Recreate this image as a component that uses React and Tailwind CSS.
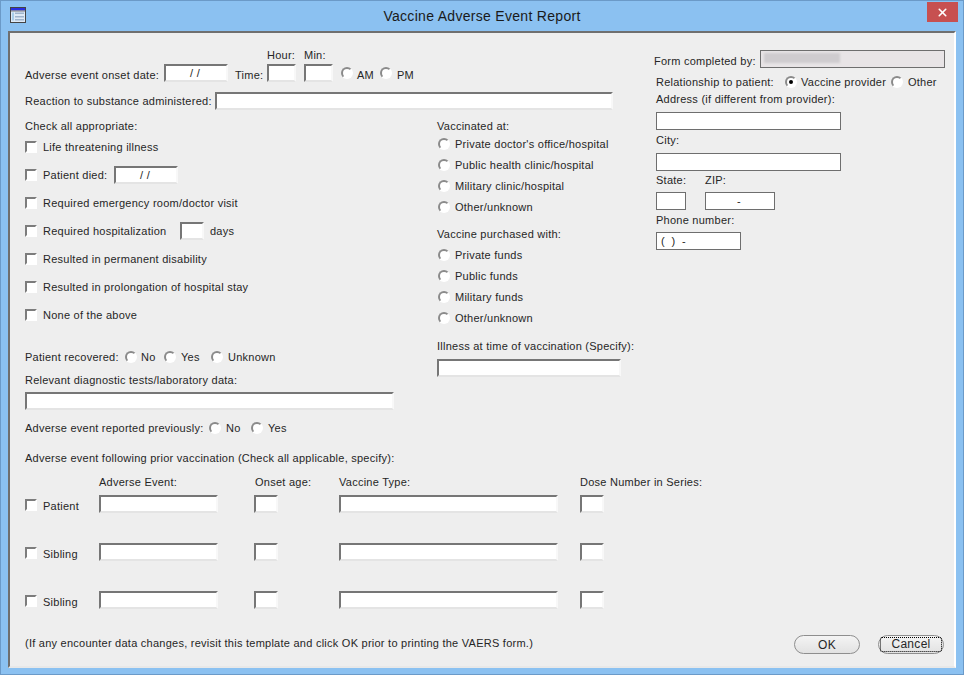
import React from "react";
import { X } from "lucide-react";

function Label({ children, className = "" }) {
	return (
		<span className={`h-[14px] whitespace-nowrap leading-[14px] ${className}`}>
			{children}
		</span>
	);
}

function Field({ className = "", children }) {
	return (
		<div
			className={`flex h-[18px] shrink-0 items-center border-2 border-[#767676] border-r-[#f8f8f8] border-b-[#e4e4e4] bg-white leading-[14px] ${className}`}
		>
			{children}
		</div>
	);
}

function FlatField({ className = "", children }) {
	return (
		<div
			className={`flex h-[18px] shrink-0 items-center border border-[#6e6e6e] bg-white leading-[14px] ${className}`}
		>
			{children}
		</div>
	);
}

function Check({ className = "" }) {
	return (
		<span
			className={`block h-[12px] w-[12px] shrink-0 border-2 border-[#7c7c7c] border-r-white border-b-white bg-white ${className}`}
		/>
	);
}

function Radio({ checked = false, className = "" }) {
	return (
		<span
			className={`flex h-[12px] w-[12px] shrink-0 items-center justify-center rounded-full border-2 border-[#8a8a8a] border-r-white border-b-white bg-white ${className}`}
		>
			{checked && <span className="h-[4px] w-[4px] rounded-full bg-black" />}
		</span>
	);
}

function RadioRow({ label }) {
	return (
		<div className="flex h-[21px] items-center pl-px">
			<Radio />
			<Label className="ml-[5px]">{label}</Label>
		</div>
	);
}

function CheckRow({ children }) {
	return (
		<div className="flex h-[28px] items-center">
			<Check />
			{children}
		</div>
	);
}

function PriorRow({ label, className = "" }) {
	return (
		<div className={`flex h-[18px] items-center ${className}`}>
			<Check className="mt-[2px]" />
			<Label className="ml-[6px] mt-[4px] w-[56px]">{label}</Label>
			<Field className="w-[119px]" />
			<Field className="ml-[36px] w-[24px]" />
			<Field className="ml-[61px] w-[219px]" />
			<Field className="ml-[22px] w-[24px]" />
		</div>
	);
}

export default function App() {
	return (
		<div className="h-[675px] w-[964px] overflow-hidden border border-[#6b9ac8] bg-[#8bc1f1] font-['Liberation_Sans',sans-serif] text-[11px] tracking-[0.25px] text-[#262626]">
			{/* title bar */}
			<div className="relative flex h-[30px] items-center justify-center">
				<svg width="16" height="16" viewBox="0 0 16 16" className="absolute left-[9px] top-[6px]">
					<rect x="0.5" y="0.5" width="15" height="15" fill="#dfeaf6" stroke="#444" />
					<rect x="1" y="1" width="14" height="2.5" fill="#2a2fe0" />
					<rect x="1" y="3.5" width="14" height="1" fill="#777" />
					<rect x="5" y="5.5" width="9" height="1.5" fill="#9fb4cc" />
					<rect x="5" y="9" width="9" height="1.5" fill="#9fb4cc" />
					<rect x="5" y="12" width="9" height="1.5" fill="#9fb4cc" />
					<rect x="2" y="5.5" width="2" height="8" fill="#a8cdea" />
				</svg>
				<span className="text-[14px] tracking-[0.3px] text-[#1a1a1a]">
					Vaccine Adverse Event Report
				</span>
				<div className="absolute right-[5px] top-[1px] flex h-[20px] w-[31px] items-center justify-center bg-[#c75050]">
					<X size={13} strokeWidth={3} color="#fff" />
				</div>
			</div>

			{/* panel */}
			<div className="mx-[7px] h-[637px] border-2 border-[#6f6f6f] border-r-white border-b-[#e8e8e8] bg-[#eeeeee]">
				<div className="flex">
					{/* left and middle */}
					<div className="w-[644px] pl-[15px]">
						<div className="mt-[15px] flex h-[14px] pl-[242px]">
							<Label className="w-[37px]">Hour:</Label>
							<Label>Min:</Label>
						</div>
						<div className="mt-[2px] flex h-[18px] items-start">
							<Label className="mt-[4px] w-[139px]">Adverse event onset date:</Label>
							<Field className="w-[64px] justify-center pr-[2px]">/ /</Field>
							<Label className="ml-[7px] mt-[4px] w-[32px]">Time:</Label>
							<Field className="w-[29px]" />
							<Field className="ml-[8px] w-[29px]" />
							<Radio className="ml-[8px] mt-[3px]" />
							<Label className="ml-[4px] mt-[4px] w-[23px]">AM</Label>
							<Radio className="mt-[3px]" />
							<Label className="ml-[5px] mt-[4px]">PM</Label>
						</div>
						<div className="mt-[10px] flex h-[18px] items-center">
							<Label className="w-[190px]">Reaction to substance administered:</Label>
							<Field className="w-[398px]" />
						</div>

						<div className="mt-[9px] flex">
							<div className="w-[412px]">
								<Label className="block">Check all appropriate:</Label>
								<CheckRow>
									<Label className="ml-[6px]">Life threatening illness</Label>
								</CheckRow>
								<CheckRow>
									<Label className="ml-[6px] w-[71px]">Patient died:</Label>
									<Field className="w-[64px] justify-center pr-[2px]">/ /</Field>
								</CheckRow>
								<CheckRow>
									<Label className="ml-[6px]">Required emergency room/doctor visit</Label>
								</CheckRow>
								<CheckRow>
									<Label className="ml-[6px] w-[137px]">Required hospitalization</Label>
									<Field className="w-[24px]" />
									<Label className="ml-[6px]">days</Label>
								</CheckRow>
								<CheckRow>
									<Label className="ml-[6px]">Resulted in permanent disability</Label>
								</CheckRow>
								<CheckRow>
									<Label className="ml-[6px]">Resulted in prolongation of hospital stay</Label>
								</CheckRow>
								<CheckRow>
									<Label className="ml-[6px]">None of the above</Label>
								</CheckRow>
								<div className="mt-[21px] flex h-[14px] items-center">
									<Label className="w-[100px]">Patient recovered:</Label>
									<Radio />
									<Label className="ml-[4px] w-[23px]">No</Label>
									<Radio />
									<Label className="ml-[5px] w-[30px]">Yes</Label>
									<Radio />
									<Label className="ml-[5px]">Unknown</Label>
								</div>
								<Label className="mt-[9px] block">Relevant diagnostic tests/laboratory data:</Label>
								<Field className="mt-[5px] w-[369px]" />
								<div className="mt-[11px] flex h-[14px] items-center">
									<Label className="w-[184px]">Adverse event reported previously:</Label>
									<Radio />
									<Label className="ml-[5px] w-[25px]">No</Label>
									<Radio />
									<Label className="ml-[5px]">Yes</Label>
								</div>
							</div>

							<div>
								<Label className="block">Vaccinated at:</Label>
								<RadioRow label="Private doctor's office/hospital" />
								<RadioRow label="Public health clinic/hospital" />
								<RadioRow label="Military clinic/hospital" />
								<RadioRow label="Other/unknown" />
								<Label className="mt-[10px] block">Vaccine purchased with:</Label>
								<div className="mt-[3px]">
									<RadioRow label="Private funds" />
									<RadioRow label="Public funds" />
									<RadioRow label="Military funds" />
									<RadioRow label="Other/unknown" />
								</div>
								<Label className="mt-[11px] block">Illness at time of vaccination (Specify):</Label>
								<Field className="mt-[6px] w-[184px]" />
							</div>
						</div>
					</div>

					{/* form completed by column */}
					<div className="w-[300px]">
						<div className="mt-[17px] flex h-[18px] items-center">
							<Label className="mt-[4px] w-[106px]">Form completed by:</Label>
							<div className="h-[18px] w-[185px] overflow-hidden border border-[#6e6e6e] bg-[#e8e4e6] py-[2px] pl-[3px]">
								<div className="h-[10px] w-[76px] bg-[#cfcccf] blur-[1px]" />
							</div>
						</div>
						<div className="ml-[2px] mt-[7px] flex h-[14px] items-center">
							<Label className="w-[129px]">Relationship to patient:</Label>
							<Radio checked />
							<Label className="ml-[4px] w-[90px]">Vaccine provider</Label>
							<Radio />
							<Label className="ml-[5px]">Other</Label>
						</div>
						<div className="ml-[2px]">
							<Label className="mt-[3px] block">Address (if different from provider):</Label>
							<FlatField className="mt-[6px] w-[185px]" />
							<Label className="mt-[3px] block">City:</Label>
							<FlatField className="mt-[6px] w-[185px]" />
							<div className="mt-[2px] flex">
								<Label className="w-[49px]">State:</Label>
								<Label>ZIP:</Label>
							</div>
							<div className="mt-[5px] flex">
								<FlatField className="w-[30px]" />
								<FlatField className="ml-[19px] w-[70px] justify-center pr-[2px]">-</FlatField>
							</div>
							<Label className="mt-[3px] block">Phone number:</Label>
							<FlatField className="mt-[5px] w-[85px] pl-[4px]">
								( &nbsp;) &nbsp;-
							</FlatField>
						</div>
					</div>
				</div>

				{/* prior vaccination */}
				<div className="pl-[15px]">
					<Label className="mt-[16px] block">
						Adverse event following prior vaccination (Check all applicable, specify):
					</Label>
					<div className="mt-[10px] flex h-[14px] pl-[74px]">
						<Label className="w-[156px]">Adverse Event:</Label>
						<Label className="w-[84px]">Onset age:</Label>
						<Label className="w-[241px]">Vaccine Type:</Label>
						<Label>Dose Number in Series:</Label>
					</div>
					<PriorRow label="Patient" className="mt-[6px]" />
					<PriorRow label="Sibling" className="mt-[30px]" />
					<PriorRow label="Sibling" className="mt-[30px]" />
					<div className="mt-[26px] flex h-[19px] items-center">
						<Label className="mb-[4px] w-[769px]">
							(If any encounter data changes, revisit this template and click OK prior to printing the VAERS form.)
						</Label>
						<button className="h-[19px] w-[66px] rounded-[10px] border border-[#8e8e8e] bg-gradient-to-b from-[#f4f4f4] to-[#e2e2e2] text-[12px] tracking-[0.3px]">
							OK
						</button>
						<button className="ml-[18px] h-[19px] w-[66px] rounded-[10px] border border-[#8e8e8e] bg-gradient-to-b from-[#f4f4f4] to-[#e2e2e2] p-px text-[12px] tracking-[0.3px]">
							<span className="block h-full w-full rounded-[2px] border border-dotted border-black leading-[13px]">
								Cancel
							</span>
						</button>
					</div>
				</div>
			</div>
		</div>
	);
}
